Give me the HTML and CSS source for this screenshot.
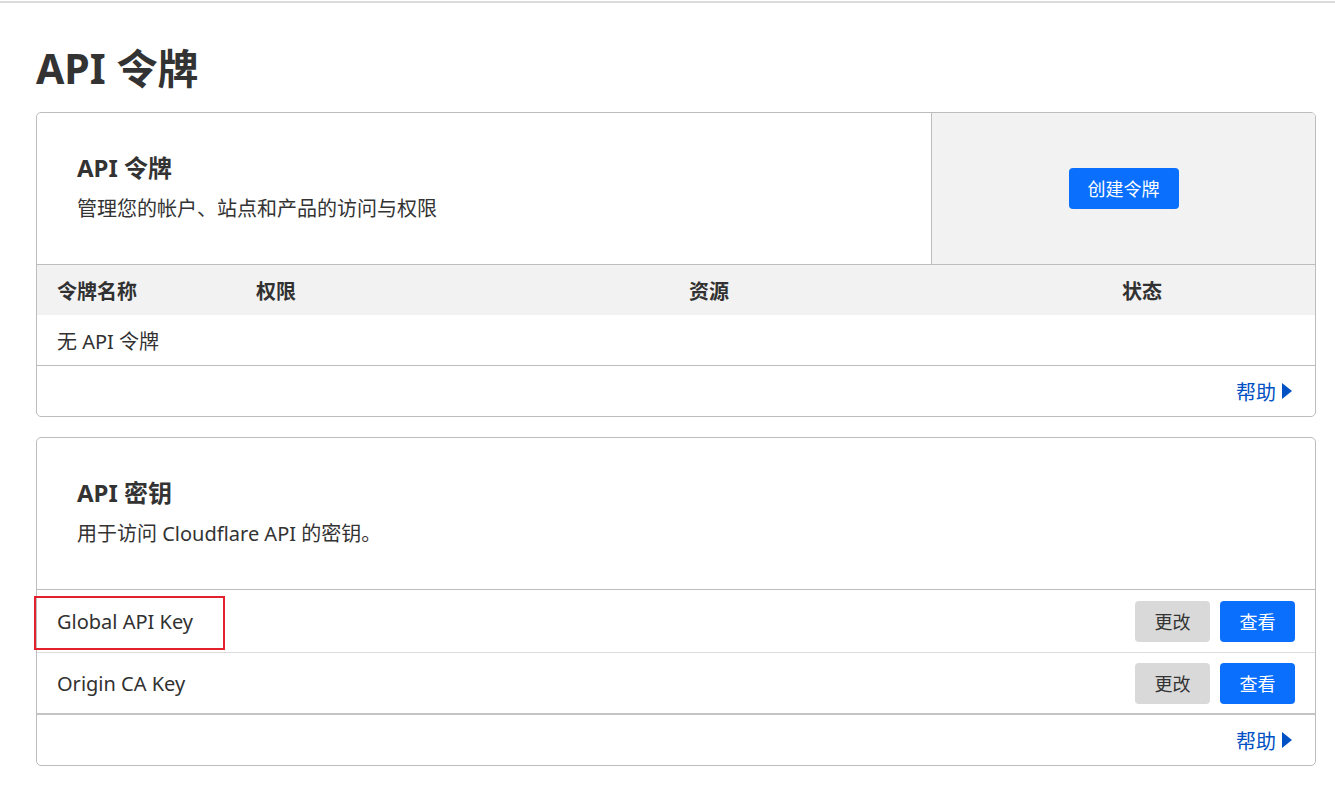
FILE: index.html
```html
<!DOCTYPE html>
<html lang="zh-CN">
<head>
<meta charset="utf-8">
<title>API 令牌</title>
<link rel="stylesheet" href="styles.css">
</head>
<body>
<div class="topline"></div>
<main class="page">
  <h1 class="page-title">API 令牌</h1>

  <section class="card">
    <div class="card-head">
      <div class="card-intro">
        <h2 class="card-title">API 令牌</h2>
        <p class="card-desc">管理您的帐户、站点和产品的访问与权限</p>
      </div>
      <div class="card-action">
        <button class="btn btn-primary btn-create">创建令牌</button>
      </div>
    </div>
    <div class="token-table">
      <div class="tt-head">
        <div class="tt-cell">令牌名称</div>
        <div class="tt-cell">权限</div>
        <div class="tt-cell">资源</div>
        <div class="tt-cell">状态</div>
      </div>
      <div class="tt-empty">无 API 令牌</div>
    </div>
    <div class="card-foot">
      <a class="help" href="#">帮助 <span class="tri"></span></a>
    </div>
  </section>

  <section class="card">
    <div class="card-head">
      <div class="card-intro">
        <h2 class="card-title">API 密钥</h2>
        <p class="card-desc">用于访问 Cloudflare API 的密钥。</p>
      </div>
    </div>
    <div class="key-list">
      <div class="key-row">
        <span class="key-name highlighted">Global API Key</span>
        <div class="key-actions">
          <button class="btn btn-gray">更改</button>
          <button class="btn btn-primary">查看</button>
        </div>
      </div>
      <div class="key-row">
        <span class="key-name">Origin CA Key</span>
        <div class="key-actions">
          <button class="btn btn-gray">更改</button>
          <button class="btn btn-primary">查看</button>
        </div>
      </div>
    </div>
    <div class="card-foot">
      <a class="help" href="#">帮助 <span class="tri"></span></a>
    </div>
  </section>
</main>
</body>
</html>
```

FILE: styles.css
```css
* { box-sizing: border-box; }
html, body { margin: 0; padding: 0; background: #fff; }
body {
  font-family: "Noto Sans", "Noto Sans CJK SC", sans-serif;
  color: #313131;
  font-size: 20px;
}
.topline { height: 2px; background: #dcdcdc; margin-top: 1px; }
.page { padding: 0 19px 0 36px; }
.page-title {
  margin: 37px 0 16px;
  font-size: 41px;
  line-height: 56px;
  font-weight: 700;
  color: #333;
}
.card {
  border: 1px solid #bdbdbd;
  border-radius: 5px;
  margin-bottom: 20px;
}
.card-head {
  display: flex;
  height: 152px;
  border-bottom: 1px solid #bdbdbd;
}
.card-intro {
  flex: 1;
  padding: 37px 40px 0;
}
.card-title {
  margin: 0;
  font-size: 24px;
  line-height: 36px;
  font-weight: 700;
  color: #333;
}
.card-desc {
  margin: 9px 0 0;
  font-size: 20px;
  line-height: 28px;
  color: #333;
}
.card-action {
  width: 384px;
  background: #f2f2f2;
  border-left: 1px solid #bdbdbd;
  border-top-right-radius: 4px;
  display: flex;
  align-items: center;
  justify-content: center;
}
.btn {
  font-family: inherit;
  border: none;
  border-radius: 4px;
  height: 41px;
  font-size: 18px;
  cursor: pointer;
  padding: 0;
}
.btn-primary { background: #0a6ffd; color: #fff; }
.btn-gray { background: #d9d9d9; color: #333; }
.btn-create { width: 110px; margin-top: -1px; }
.token-table { border-bottom: 1px solid #bdbdbd; }
.tt-head {
  display: grid;
  grid-template-columns: 199px 433px 433px 1fr;
  background: #f2f2f2;
  height: 50px;
  align-items: center;
  font-weight: 700;
}
.tt-cell { padding-left: 20px; }
.tt-empty {
  height: 50px;
  display: flex;
  align-items: center;
  padding-left: 20px;
}
.card-foot {
  height: 50px;
  display: flex;
  align-items: center;
  justify-content: flex-end;
  padding-right: 23px;
}
.help {
  color: #0051c3;
  text-decoration: none;
  font-size: 20px;
  display: flex;
  align-items: center;
  gap: 6px;
}
.tri {
  width: 0; height: 0;
  border-top: 8px solid transparent;
  border-bottom: 8px solid transparent;
  border-left: 10px solid #0051c3;
}
.key-list { border-bottom: 2px solid #c4c4c4; }
.key-row {
  height: 62px;
  display: flex;
  align-items: center;
  justify-content: space-between;
  padding: 0 20px;
}
.key-row + .key-row { border-top: 1px solid #dcdcdc; height: 61px; }
.key-name { position: relative; }
.highlighted::after {
  content: "";
  position: absolute;
  left: -23px;
  top: -12px;
  width: 187px;
  height: 50px;
  border: 2px solid #e3202c;
}
.key-actions { display: flex; gap: 10px; }
.key-actions .btn { width: 75px; }
```
